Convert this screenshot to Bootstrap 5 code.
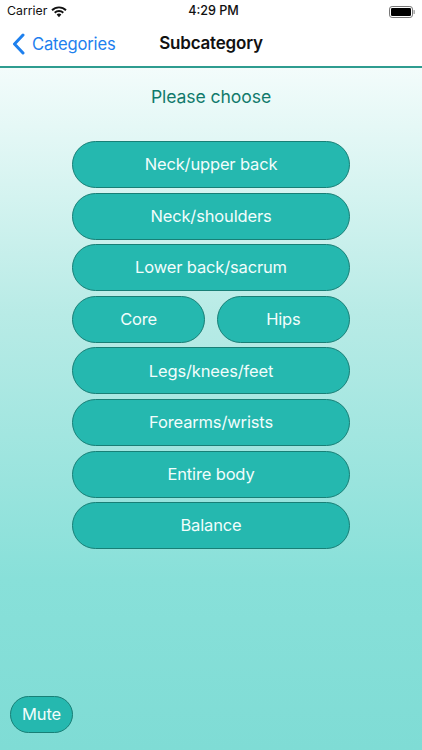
<!DOCTYPE html>
<html lang="en">
<head>
<meta charset="utf-8">
<title>Subcategory</title>
<link href="https://cdn.jsdelivr.net/npm/bootstrap@5.3.0/dist/css/bootstrap.min.css" rel="stylesheet">
<style>
html, body { height: 100%; }
body { font-family: Inter, "Noto Sans", sans-serif; background: #fff; overflow: hidden; }
.app-shell { width: 422px; height: 750px; }
.status-row { height: 23px; padding: 0 7px; font-size: 12.3px; color: #111; }
.status-left { width: 145px; gap: 4px; }
.status-right { width: 140px; }
.time-text { font-weight: 500; font-size: 12.6px; }
.nav-row { height: 45px; border-bottom: 2px solid #2e9c90; padding-left: 12px; position: relative; }
.back-text { color: #1e80ee; font-size: 16.6px; letter-spacing: -.2px; text-decoration: none; gap: 7px; }
.nav-title { font-size: 17px; font-weight: 600; color: #111; width: 422px; text-align: center; left: 0; top: 8px; letter-spacing: -.2px; }
.content-area { background: linear-gradient(#f3fcfb 0%, #b8ebe6 36%, #88e0d9 75%, #7fdcd5 100%); padding-top: 18px; }
.prompt-text { color: #117a6c; font-size: 17.6px; line-height: 22px; margin-bottom: 33px; letter-spacing: -.1px; }
.choice-stack { width: 278px; gap: 4.6px; }
.pill-btn { background: #25b8af; border: 1px solid #187f76; border-radius: 23.5px; color: #f2fdfc; font-size: 16.5px; height: 47px; padding: 0; letter-spacing: -.15px; }
.pill-btn:hover, .pill-btn:active { background: #25b8af; border-color: #187f76; color: #f2fdfc; }
.half-row { gap: 11.5px; }
.mute-btn { width: 63px; height: 37px; border-radius: 18.5px; margin: 0 0 17px 10px; font-size: 16.5px; }
</style>
</head>
<body>
<div class="app-shell d-flex flex-column">
  <div class="status-row d-flex align-items-center justify-content-between">
    <div class="status-left d-flex align-items-center">
      <span>Carrier</span>
      <svg width="16" height="12" viewBox="0 0 16 12" aria-hidden="true">
        <path d="M1 4.2 A10 10 0 0 1 15 4.2" fill="none" stroke="#111" stroke-width="1.9"/>
        <path d="M3.7 6.8 A6.2 6.2 0 0 1 12.3 6.8" fill="none" stroke="#111" stroke-width="1.9"/>
        <path d="M5.6 8.6 A3.4 3.4 0 0 1 10.4 8.6 L8 11.2 Z" fill="#111"/>
      </svg>
    </div>
    <div class="time-text">4:29 PM</div>
    <div class="status-right d-flex justify-content-end">
      <svg width="26" height="12" viewBox="0 0 26 12" aria-hidden="true">
        <rect x=".5" y=".5" width="23" height="11" rx="2.6" fill="none" stroke="#777"/>
        <rect x="2" y="2" width="20" height="8" rx="1.3" fill="#000"/>
        <rect x="24.5" y="4" width="1.3" height="4" rx=".6" fill="#999"/>
      </svg>
    </div>
  </div>
  <nav class="nav-row d-flex align-items-center">
    <a class="back-text d-flex align-items-center" href="#">
      <svg width="13" height="22" viewBox="0 0 13 22" aria-hidden="true">
        <path d="M11 2 L2.5 11 L11 20" fill="none" stroke="#1e80ee" stroke-width="3" stroke-linecap="round" stroke-linejoin="round"/>
      </svg>
      <span>Categories</span>
    </a>
    <div class="nav-title position-absolute">Subcategory</div>
  </nav>
  <main class="content-area flex-grow-1 d-flex flex-column">
    <div class="prompt-text text-center">Please choose</div>
    <div class="choice-stack d-flex flex-column mx-auto">
      <button class="btn pill-btn" type="button">Neck/upper back</button>
      <button class="btn pill-btn" type="button">Neck/shoulders</button>
      <button class="btn pill-btn" type="button">Lower back/sacrum</button>
      <div class="half-row d-flex">
        <button class="btn pill-btn flex-fill w-50" type="button">Core</button>
        <button class="btn pill-btn flex-fill w-50" type="button">Hips</button>
      </div>
      <button class="btn pill-btn" type="button">Legs/knees/feet</button>
      <button class="btn pill-btn" type="button">Forearms/wrists</button>
      <button class="btn pill-btn" type="button">Entire body</button>
      <button class="btn pill-btn" type="button">Balance</button>
    </div>
    <button class="btn pill-btn mute-btn mt-auto align-self-start" type="button">Mute</button>
  </main>
</div>
<script src="https://cdn.jsdelivr.net/npm/bootstrap@5.3.0/dist/js/bootstrap.bundle.min.js"></script>
</body>
</html>
